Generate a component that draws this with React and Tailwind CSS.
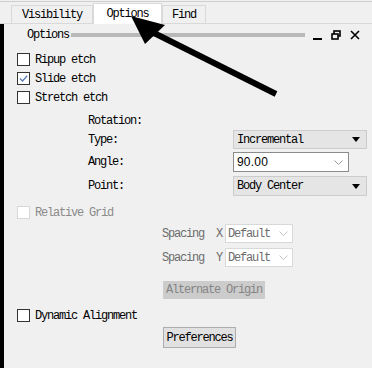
const mono = "font-['Liberation_Mono',monospace] text-[12px] tracking-[-1.2px] leading-none";

function Box({ checked, disabled }) {
  return (
    <span
      className={`flex h-[13px] w-[13px] shrink-0 items-center justify-center border bg-white ${
        disabled ? "border-[#d8d8d8]" : "border-[#333333]"
      }`}
    >
      {checked && (
        <svg viewBox="0 0 11 11" className="h-[11px] w-[11px]">
          <path d="M2 5.5 L4.5 8 L9.2 2.8" fill="none" stroke="#5a7cb3" strokeWidth="1.3" />
        </svg>
      )}
    </span>
  );
}

function CheckRow({ label, checked, disabled, className = "" }) {
  return (
    <div className={`flex h-[13px] items-center pl-[13px] ${className}`}>
      <Box checked={checked} disabled={disabled} />
      <span className={`ml-[5px] ${mono} ${disabled ? "text-[#8a8a8a]" : "text-black"}`}>{label}</span>
    </div>
  );
}

function Triangle() {
  return (
    <svg viewBox="0 0 8 5" className="h-[5px] w-[8px]">
      <path d="M0 0 H8 L4 5 Z" fill="#000" />
    </svg>
  );
}

function Chevron({ color = "#9a9a9a" }) {
  return (
    <svg viewBox="0 0 9 5" className="h-[5px] w-[9px]">
      <path d="M0.5 0.5 L4.5 4.5 L8.5 0.5" fill="none" stroke={color} strokeWidth="1" />
    </svg>
  );
}

function Dropdown({ value }) {
  return (
    <div className="flex h-full w-[134px] items-center justify-between border border-[#cccccc] bg-[#e5e5e5] pl-[3px] pr-[6px]">
      <span className={mono}>{value}</span>
      <Triangle />
    </div>
  );
}

function SpacingRow({ axis, className = "" }) {
  return (
    <div className={`flex h-[19px] items-center pl-[158px] ${className}`}>
      <span className={`${mono} text-[#6d6d6d]`}>Spacing</span>
      <span className={`ml-[12px] ${mono} text-[#6d6d6d]`}>{axis}</span>
      <div className="ml-[3px] flex h-full w-[68px] items-center justify-between border border-[#d9d9d9] bg-white pl-[2px] pr-[4px]">
        <span className={`${mono} text-[#6d6d6d]`}>Default</span>
        <Chevron color="#c4c4c4" />
      </div>
    </div>
  );
}

export default function App() {
  return (
    <div className="relative flex h-[368px] w-[372px] flex-col overflow-hidden bg-[#f0f0f0]">
      <div className="mt-[1px] flex h-[23px] items-end border-t border-b border-t-[#cfcfcf] border-b-[#d9d9d9] pl-[11px]">
        <div className={`flex h-[18px] w-[82px] items-center justify-center border border-b-0 border-[#d9d9d9] ${mono}`}>
          Visibility
        </div>
        <div className={`-mb-px flex h-[21px] w-[69px] items-center justify-center border-x border-t border-[#d9d9d9] bg-white ${mono}`}>
          Options
        </div>
        <div className={`flex h-[18px] w-[44px] items-center justify-center border border-b-0 border-[#d9d9d9] ${mono}`}>
          Find
        </div>
      </div>

      <div className="flex flex-1">
        <div className="w-[4px] bg-black" />
        <div className="flex flex-1 flex-col">
          <div className="mt-[4px] flex h-[14px] items-center pl-[23px]">
            <span className={mono}>Options</span>
            <div className="ml-[2px] h-[4px] w-[234px] bg-[#b9b9b9]" />
            <div className="ml-[8px] flex items-center gap-[9px]">
              <svg viewBox="0 0 9 10" className="h-[10px] w-[9px]">
                <rect x="0" y="8" width="9" height="2" fill="#000" />
              </svg>
              <svg viewBox="0 0 10 10" className="h-[10px] w-[10px]">
                <rect x="3" y="1" width="6" height="5" fill="none" stroke="#000" strokeWidth="1.6" />
                <rect x="1" y="4" width="6" height="5" fill="#f0f0f0" stroke="#000" strokeWidth="1.6" />
              </svg>
              <svg viewBox="0 0 10 10" className="h-[10px] w-[10px]">
                <path d="M1 1 L9 9 M9 1 L1 9" stroke="#000" strokeWidth="1.6" />
              </svg>
            </div>
          </div>

          <CheckRow label="Ripup etch" className="mt-[11px]" />
          <CheckRow label="Slide etch" checked className="mt-[6px]" />
          <CheckRow label="Stretch etch" className="mt-[6px]" />

          <div className="mt-[8px] flex h-[18px] items-center pl-[84px]">
            <span className={mono}>Rotation:</span>
          </div>
          <div className="flex h-[19px] items-center pl-[84px]">
            <span className={`w-[145px] ${mono}`}>Type:</span>
            <Dropdown value="Incremental" />
          </div>
          <div className="mt-[3px] flex h-[20px] items-center pl-[84px]">
            <span className={`w-[145px] ${mono}`}>Angle:</span>
            <div className="flex h-full w-[116px] items-center justify-between border border-[#8c8c8c] bg-white pl-[3px] pr-[5px]">
              <span className="font-['Liberation_Sans',sans-serif] text-[12px] tracking-[0.2px] leading-none">90.00</span>
              <Chevron />
            </div>
          </div>
          <div className="mt-[4px] flex h-[20px] items-center pl-[84px]">
            <span className={`w-[145px] ${mono}`}>Point:</span>
            <Dropdown value="Body Center" />
          </div>

          <CheckRow label="Relative Grid" disabled className="mt-[10px]" />
          <SpacingRow axis="X" className="mt-[5px]" />
          <SpacingRow axis="Y" className="mt-[5px]" />

          <div className="mt-[14px] pl-[159px]">
            <div className={`flex h-[18px] w-[102px] items-center justify-center bg-[#cccccc] text-[#858585] ${mono}`}>
              Alternate Origin
            </div>
          </div>

          <CheckRow label="Dynamic Alignment" className="mt-[10px]" />

          <div className="mt-[5px] pl-[159px]">
            <div className={`flex h-[21px] w-[73px] items-center justify-center border border-[#adadad] bg-[#e1e1e1] ${mono}`}>
              Preferences
            </div>
          </div>
        </div>
      </div>

      <svg viewBox="0 0 372 368" className="pointer-events-none absolute inset-0 h-[368px] w-[372px]">
        <line x1="276" y1="94" x2="150" y2="31" stroke="#000" strokeWidth="6" />
        <polygon points="131,16 165,25 145,44" fill="#000" />
      </svg>
    </div>
  );
}
